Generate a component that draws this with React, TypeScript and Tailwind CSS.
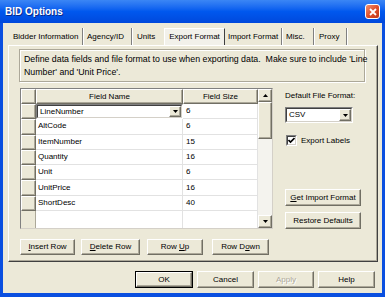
import React from "react";

const raised =
  "bg-[#ECE9D8] border border-t-white border-l-white border-r-[#716F64] border-b-[#716F64] shadow-[inset_-1px_-1px_0_#ACA899]";
const sunken = "border border-t-[#808080] border-l-[#808080] border-r-white border-b-white";

const rows = [
  ["LineNumber", "6"],
  ["AltCode", "6"],
  ["ItemNumber", "15"],
  ["Quantity", "16"],
  ["Unit", "6"],
  ["UnitPrice", "16"],
  ["ShortDesc", "40"],
];

const tabs = [
  { label: "Bidder Information", w: "w-[75px]", pl: "pl-[5px]" },
  { label: "Agency/ID", w: "w-[49px]", pl: "pl-[4px]" },
  { label: "Units", w: "w-[32px]", pl: "pl-[5px]" },
  { label: "Export Format", w: "w-[61px]", pl: "", active: true },
  { label: "Import Format", w: "w-[57px]", pl: "pl-[3px]" },
  { label: "Misc.", w: "w-[32px]", pl: "pl-[4px]" },
  { label: "Proxy", w: "w-[33px]", pl: "pl-[5px]" },
];

function Arrow({ up }: { up?: boolean }) {
  return (
    <svg width="5" height="3" viewBox="0 0 5 3">
      <path d={up ? "M0 3 L2.5 0 L5 3Z" : "M0 0 L5 0 L2.5 3Z"} fill="#000" />
    </svg>
  );
}

function Combo({ text, className }: { text: string; className: string }) {
  return (
    <div className={`${sunken} bg-white ${className}`}>
      <div className="h-full flex border border-t-[#404040] border-l-[#404040] border-r-[#D4D0C8] border-b-[#D4D0C8]">
        <span className="flex-1 pl-[2px] flex items-center">{text}</span>
        <div className={`${raised} w-[12px] flex items-center justify-center`}>
          <Arrow />
        </div>
      </div>
    </div>
  );
}

function Btn({ children, className, disabled }: { children: React.ReactNode; className: string; disabled?: boolean }) {
  return (
    <div
      className={`${raised} ${className} flex items-center justify-center ${
        disabled ? "text-[#ACA899] [text-shadow:1px_1px_0_#fff]" : ""
      }`}
    >
      {children}
    </div>
  );
}

export default function App() {
  return (
    <div className="w-[385px] h-[297px] bg-[#0A4FE0] flex flex-col overflow-hidden text-black text-[8px] leading-none font-['Liberation_Sans',Arial,sans-serif]">
      {/* title bar */}
      <div className="h-[23px] flex items-center justify-between pl-[5px] pr-[5px] bg-gradient-to-b from-[#3B86F5] via-[#0058EE] to-[#0048DC]">
        <span className="text-white font-bold text-[10px] [text-shadow:1px_1px_0_#0A2A8A]">BID Options</span>
        <div className="w-[15px] h-[15px] rounded-[3px] border border-white bg-gradient-to-br from-[#F09070] via-[#E0502A] to-[#C0381A] flex items-center justify-center">
          <svg width="8" height="8" viewBox="0 0 8 8">
            <path d="M1 1 L7 7 M7 1 L1 7" stroke="#fff" strokeWidth="1.8" />
          </svg>
        </div>
      </div>

      <div className="flex-1 mx-[3px] mb-[4px] bg-[#ECE9D8] flex flex-col">
        {/* tabs */}
        <div className="mt-[5px] ml-[5px] h-[17px] flex items-stretch">
          {tabs.map((t, i) => (
            <div
              key={t.label}
              className={`${t.w} ${t.pl} flex items-center ${
                t.active
                  ? "bg-[#F2F1EA] border-l border-t border-white border-r border-r-[#404040] justify-center"
                  : tabs[i + 1]?.active
                  ? ""
                  : "border-r border-r-[#808080] shadow-[1px_0_0_#fff]"
              }`}
            >
              <span className="whitespace-nowrap">{t.label}</span>
            </div>
          ))}
        </div>

        {/* panel */}
        <div className="ml-[5px] w-[370px] h-[217px] border border-t-white border-l-white border-r-[#404040] border-b-[#404040] shadow-[inset_-1px_-1px_0_#ACA899] flex flex-col pl-[10px] pt-[3px]">
          <div className="w-[346px] h-[33px] border border-[#ACA899] shadow-[inset_1px_1px_0_#fff,1px_1px_0_#fff] pl-[4px] pt-[5px] flex flex-col gap-[4px] whitespace-pre text-[8.8px]">
            <span>Define data fields and file format to use when exporting data.  Make sure to include 'Line</span>
            <span>Number' and 'Unit Price'.</span>
          </div>

          <div className="mt-[6px] flex">
            {/* grid */}
            <div className="w-[253px] h-[141px] ml-[1px] border border-t-[#808080] border-l-[#808080] border-r-[#D4D0C8] border-b-[#D4D0C8] flex">
              <div className="w-[237px] flex flex-col bg-white">
                <div className="h-[15px] flex bg-[#ECE9D8]">
                  <div className={`${raised} w-[15px]`} />
                  <div className={`${raised} w-[147px] flex items-center justify-center`}>Field Name</div>
                  <div className={`${raised} w-[75px] flex items-center justify-center`}>Field Size</div>
                </div>
                {rows.map(([name, size], i) => (
                  <div key={name} className="h-[15.3px] flex">
                    <div className={`${raised} w-[15px]`} />
                    {i === 0 ? (
                      <Combo text={name} className="w-[147px]" />
                    ) : (
                      <div className="w-[147px] border-r border-b border-[#E2E2E2] flex items-center pl-[2px]">{name}</div>
                    )}
                    <div className="w-[75px] border-r border-b border-[#E2E2E2] flex items-center pl-[3px]">{size}</div>
                  </div>
                ))}
                <div className="flex-1 flex">
                  <div className="w-[15px] bg-[#ECE9D8] border-r border-[#ACA899]" />
                  <div className="w-[147px] border-r border-[#E2E2E2]" />
                  <div className="w-[75px] border-r border-[#E2E2E2]" />
                </div>
              </div>
              {/* scrollbar */}
              <div className="w-[14px] flex flex-col bg-[#F4F3EE]">
                <div className={`${raised} h-[13px] flex items-center justify-center`}>
                  <Arrow up />
                </div>
                <div className={`${raised} h-[37px]`} />
                <div className="flex-1" />
                <div className={`${raised} h-[13px] flex items-center justify-center`}>
                  <Arrow />
                </div>
              </div>
            </div>

            {/* right column */}
            <div className="ml-[12px] w-[76px] flex flex-col justify-between">
              <div className="flex flex-col">
                <span className="mt-[4px]">Default File Format:</span>
                <Combo text="CSV" className="mt-[7px] w-[68px] h-[16px]" />
                <div className="mt-[12px] flex items-center gap-[4px] pl-[1px]">
                  <div className={`${sunken} w-[11px] h-[11px] bg-white`}>
                    <div className="h-full border border-t-[#404040] border-l-[#404040] border-r-[#D4D0C8] border-b-[#D4D0C8] flex items-center justify-center">
                      <svg width="7" height="7" viewBox="0 0 7 7">
                        <path d="M0.5 3 L2.5 5 L6.5 1" stroke="#000" strokeWidth="1.6" fill="none" />
                      </svg>
                    </div>
                  </div>
                  <span>Export Labels</span>
                </div>
              </div>
              <div className="flex flex-col gap-[6px]">
                <Btn className="h-[17px]">
                  <span>
                    <u>G</u>et Import Format
                  </span>
                </Btn>
                <Btn className="h-[17px]">Restore Defaults</Btn>
              </div>
            </div>
          </div>

          <div className="mt-[10px] ml-[1px] flex gap-[6px]">
            <Btn className="w-[55px] h-[16px]">
              <span>
                <u>I</u>nsert Row
              </span>
            </Btn>
            <Btn className="w-[59px] h-[16px]">
              <span>
                <u>D</u>elete Row
              </span>
            </Btn>
            <Btn className="w-[56px] h-[16px] ml-[1px]">
              <span>
                Row <u>U</u>p
              </span>
            </Btn>
            <Btn className="w-[57px] h-[16px] ml-[3px]">
              <span>
                Row D<u>o</u>wn
              </span>
            </Btn>
          </div>
        </div>

        {/* dialog buttons */}
        <div className="mt-[9px] pr-[7px] flex justify-end gap-[4px]">
          <div className="w-[58px] h-[17px] border border-black flex">
            <Btn className="flex-1">OK</Btn>
          </div>
          <Btn className="w-[57px] h-[17px]">Cancel</Btn>
          <Btn className="w-[56px] h-[17px]" disabled>
            Apply
          </Btn>
          <Btn className="w-[57px] h-[17px]">Help</Btn>
        </div>
      </div>
    </div>
  );
}
